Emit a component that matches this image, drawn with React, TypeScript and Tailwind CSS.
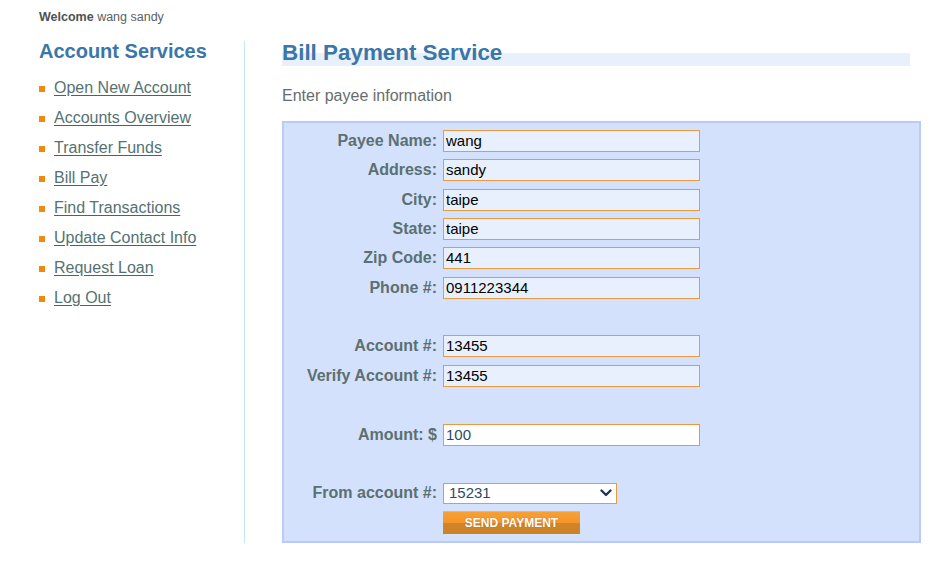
import React from 'react';

const links = [
  'Open New Account',
  'Accounts Overview',
  'Transfer Funds',
  'Bill Pay',
  'Find Transactions',
  'Update Contact Info',
  'Request Loan',
  'Log Out',
];

type Row =
  | { kind: 'input'; label: string; value: string; plain?: boolean }
  | { kind: 'gap' }
  | { kind: 'select'; label: string; value: string }
  | { kind: 'button' };

const rows: Row[] = [
  { kind: 'input', label: 'Payee Name:', value: 'wang' },
  { kind: 'input', label: 'Address:', value: 'sandy' },
  { kind: 'input', label: 'City:', value: 'taipe' },
  { kind: 'input', label: 'State:', value: 'taipe' },
  { kind: 'input', label: 'Zip Code:', value: '441' },
  { kind: 'input', label: 'Phone #:', value: '0911223344' },
  { kind: 'gap' },
  { kind: 'input', label: 'Account #:', value: '13455' },
  { kind: 'input', label: 'Verify Account #:', value: '13455' },
  { kind: 'gap' },
  { kind: 'input', label: 'Amount: $', value: '100', plain: true },
  { kind: 'gap' },
  { kind: 'select', label: 'From account #:', value: '15231' },
  { kind: 'button' },
];

function FormRow({ row }: { row: Row }) {
  if (row.kind === 'gap') return <div className="h-[29.36px]" />;

  const label = row.kind === 'button' ? '' : row.label;

  return (
    <div className="flex items-center h-[29.36px]">
      <div className="w-[153px] text-right text-[16px] font-bold text-[#5b7070] leading-[20px]">{label}</div>
      <div className="ml-[6px]">
        {row.kind === 'input' && (
          <div
            className={`w-[257px] h-[22px] border border-[#e99a3e] px-[2px] flex items-center text-[15px] leading-[18px] ${
              row.plain ? 'bg-white text-[#2d4a68]' : 'bg-[#e8f0fe] text-black'
            }`}
          >
            {row.value}
          </div>
        )}
        {row.kind === 'select' && (
          <div className="w-[174px] h-[21px] border border-[#e99a3e] bg-white pl-[5px] pr-[4px] flex items-center justify-between text-[15px] leading-[18px] text-[#2d4a68]">
            <span>{row.value}</span>
            <svg width="12" height="8" viewBox="0 0 12 8" fill="none">
              <path d="M1.5 1.5 L6 6 L10.5 1.5" stroke="#1f3a58" strokeWidth="2.4" strokeLinecap="round" strokeLinejoin="round" />
            </svg>
          </div>
        )}
        {row.kind === 'button' && (
          <div className="w-[137px] h-[23px] border-t border-[#f9b35b] bg-[linear-gradient(to_bottom,#f7a034_0%,#f5952a_50%,#cf8528_50%,#cc8226_100%)] flex items-center justify-center pb-px text-[12px] font-bold text-white leading-none [text-shadow:0_0_1px_rgba(120,60,0,0.5)]">
            SEND PAYMENT
          </div>
        )}
      </div>
    </div>
  );
}

export default function App() {
  return (
    <div className="w-[942px] h-[569px] bg-white font-['Liberation_Sans',Arial,sans-serif] overflow-hidden">
      {/* Welcome */}
      <p className="pt-[10px] pl-[39px] text-[12.5px] leading-[15px] text-[#5a5f5f]">
        <b className="text-[#4d5353]">Welcome</b> wang sandy
      </p>

      <div className="flex mt-[16px] pl-[39px]">
        {/* Sidebar */}
        <aside className="w-[206px] h-[502px] border-r border-[#c4e8e8]">
          <h2 className="text-[20px] leading-[20px] font-bold text-[#3a76a8]">Account Services</h2>
          <ul className="mt-[12px]">
            {links.map((l) => (
              <li key={l} className="flex items-center h-[30px]">
                <span className="w-[6px] h-[6px] bg-[#ee8a0d] mt-[2px]" />
                <a className="ml-[9px] text-[16px] text-[#557272] underline decoration-[#4a6464] underline-offset-[2px]">
                  {l}
                </a>
              </li>
            ))}
          </ul>
        </aside>

        {/* Content */}
        <main className="ml-[37px] w-[639px]">
          <h1 className="w-[628px] -mt-px text-[22.4px] leading-[26px] font-bold text-[#3a76a8] bg-[linear-gradient(to_bottom,transparent_50%,#e8f0fc_50%)]">
            Bill Payment Service
          </h1>
          <p className="mt-[21px] text-[16px] leading-[18px] text-[#676d6d]">Enter payee information</p>

          <div className="mt-[16px] w-[639px] h-[422px] border-2 border-[#b8cbfa] bg-[#d4e1fc] pt-[3.3px]">
            {rows.map((r, i) => (
              <FormRow key={i} row={r} />
            ))}
          </div>
        </main>
      </div>
    </div>
  );
}
